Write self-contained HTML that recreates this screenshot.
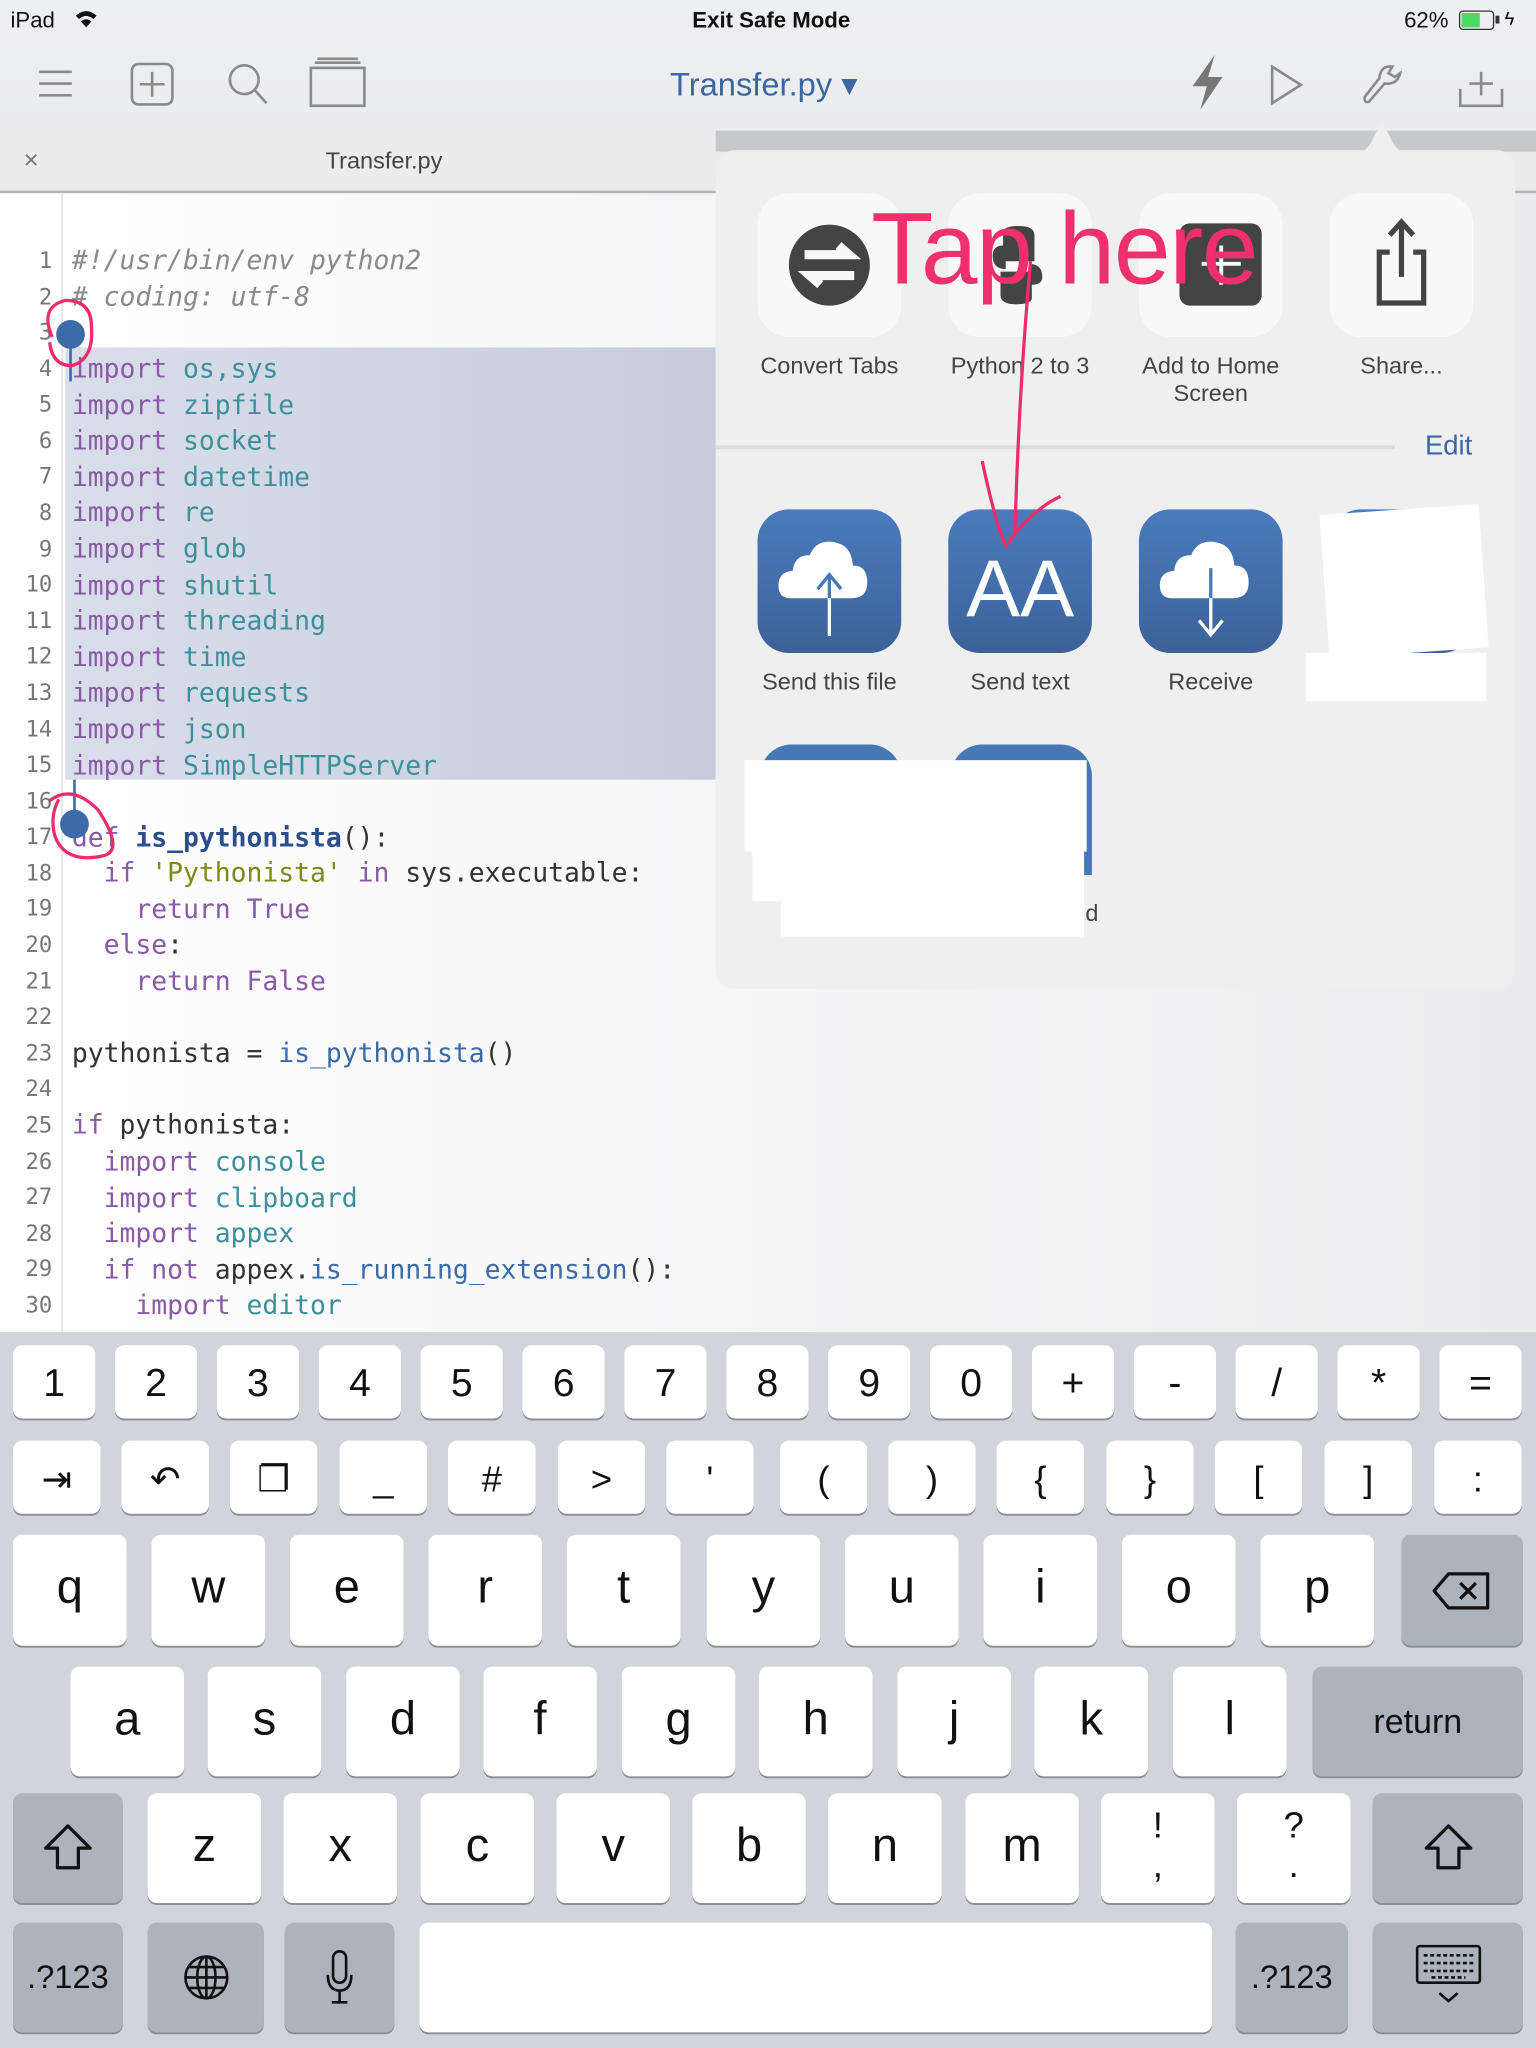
<!DOCTYPE html>
<html><head><meta charset="utf-8">
<style>
*{margin:0;padding:0;box-sizing:border-box}
html,body{width:1536px;height:2048px;overflow:hidden;background:#d1d4da}
#w{position:absolute;left:0;top:0;width:1176px;height:1568px;transform:scale(1.3061224);transform-origin:0 0;font-family:"Liberation Sans",sans-serif;overflow:hidden}
.a{position:absolute}
#top{left:0;top:0;width:1176px;height:148px;background:linear-gradient(#eeeff1,#ebebec)}
#ed{left:0;top:148px;width:1176px;height:872px;background:linear-gradient(90deg,#ffffff 0%,#f7f7f8 40%,#ececee 100%)}
.ln{position:absolute;left:0;width:40px;text-align:right;font-family:"DejaVu Sans Mono",monospace;font-size:17px;color:#777}
.cl{position:absolute;left:55px;font-family:"DejaVu Sans Mono",monospace;font-size:20.2px;white-space:pre;color:#333}
.k{color:#8a5aa6}.m{color:#3d8f9c}.c{color:#8a8a8a;font-style:italic}.f{color:#2b4f8a;font-weight:bold}.s{color:#7b8a1a}.b{color:#3a6aa8}
#kb{left:0;top:1020px;width:1176px;height:548px;background:#d1d4da}
.key{position:absolute;background:#fff;border-radius:7px;box-shadow:0 1.5px 0 #8b8e94;text-align:center;color:#111;font-family:"Liberation Sans",sans-serif}
.g{background:#adb3bd}
.r1{top:1030px;height:56px;width:63px;font-size:30px;line-height:60px}
.r2{top:1103px;height:56px;width:67px;font-size:28px;line-height:60px}
.r3{top:1175px;height:85px;width:87px;font-size:36px;line-height:80px}
.r4{top:1276px;height:84px;width:87px;font-size:36px;line-height:80px}
.r5{top:1373px;height:84px;width:87px;font-size:36px;line-height:80px}
.r6{top:1472px;height:84px;font-size:25px;line-height:84px}
.ic{position:absolute;width:110px;height:110px;border-radius:24px}
.wi{background:#f8f8f8}
.bl{background:linear-gradient(#4a7bbd,#3c6298)}
.lb{position:absolute;width:146px;text-align:center;font-size:18px;color:#444;line-height:21px}
</style></head><body><div id="w">
<div id="top" class="a"></div>
<div class="a" style="left:8px;top:6px;font-size:17px;color:#111">iPad</div>
<svg class="a" style="left:56px;top:6px" width="20" height="16" viewBox="0 0 20 16"><path d="M2 6 Q10 -1 18 6 L15.5 8.5 Q10 4 4.5 8.5Z M6 10.5 Q10 7 14 10.5 L10 15Z" fill="#111"/></svg>
<div class="a" style="left:0;width:1181px;top:6px;text-align:center;font-size:17px;font-weight:bold;color:#111">Exit Safe Mode</div>
<div class="a" style="left:1075px;top:6px;font-size:17px;color:#111">62%</div>
<div class="a" style="left:1117px;top:8px;width:27px;height:15px;border:1.5px solid #333;border-radius:3px;padding:1px"><div style="width:62%;height:100%;background:#4cd964"></div></div>
<div class="a" style="left:1145px;top:12px;width:3px;height:6px;background:#333"></div>
<div class="a" style="left:1152px;top:6px;font-size:14px">ϟ</div>
<svg class="a" style="left:0;top:40px" width="300" height="50"><g stroke="#8a8a8a" stroke-width="2" fill="none"><path d="M30 15H55M30 24H55M30 33H55"/><rect x="101" y="9" width="31" height="31" rx="5"/><path d="M116.5 15V34M107 24.5H126"/><circle cx="187" cy="21" r="11"/><path d="M195 29L204 39"/><rect x="238" y="12" width="41" height="29"/><path d="M241 8H276M243 5H274"/></g></svg>
<div class="a" style="left:513px;top:50px;font-size:25px;color:#3c66a3">Transfer.py ▾</div>
<svg class="a" style="left:900px;top:38px" width="260" height="52"><g fill="#777"><path d="M30 4L13 28H24L19 46L36 21H25Z"/></g><g stroke="#8a8a8a" stroke-width="2" fill="none"><path d="M74 13L96 27L74 41Z"/><path d="M148 40L160 26Q170 27 172 18L168 21L163 18L166 13Q157 12 156 22L145 36Q144 41 148 40Z"/><path d="M218 30V43H250V30M234 17V35M225 26H243"/></g></svg>
<div class="a" style="left:18px;top:112px;font-size:20px;color:#777">×</div>
<div class="a" style="left:0;width:588px;top:113px;text-align:center;font-size:18px;color:#444">Transfer.py</div>
<div class="a" style="left:548px;top:100px;width:628px;height:16px;background:#c7c8cb"></div>
<div class="a" style="left:0;top:146px;width:1176px;height:2px;background:#b5b5b5"></div>
<div id="ed" class="a"></div>
<div class="a" style="left:47px;top:148px;width:1px;height:872px;background:#ddd"></div>
<div class="a" style="left:50px;top:266px;width:498px;height:331px;background:linear-gradient(90deg,#d8deea,#c5ccdb)"></div>
<div class="ln" style="top:190px">1</div><div class="ln" style="top:218px">2</div><div class="ln" style="top:245px">3</div><div class="ln" style="top:273px">4</div><div class="ln" style="top:300px">5</div><div class="ln" style="top:328px">6</div><div class="ln" style="top:355px">7</div><div class="ln" style="top:383px">8</div><div class="ln" style="top:411px">9</div><div class="ln" style="top:438px">10</div><div class="ln" style="top:466px">11</div><div class="ln" style="top:493px">12</div><div class="ln" style="top:521px">13</div><div class="ln" style="top:549px">14</div><div class="ln" style="top:576px">15</div><div class="ln" style="top:604px">16</div><div class="ln" style="top:631px">17</div><div class="ln" style="top:659px">18</div><div class="ln" style="top:686px">19</div><div class="ln" style="top:714px">20</div><div class="ln" style="top:742px">21</div><div class="ln" style="top:769px">22</div><div class="ln" style="top:797px">23</div><div class="ln" style="top:824px">24</div><div class="ln" style="top:852px">25</div><div class="ln" style="top:880px">26</div><div class="ln" style="top:907px">27</div><div class="ln" style="top:935px">28</div><div class="ln" style="top:962px">29</div><div class="ln" style="top:990px">30</div>
<div class="cl c" style="top:187px">#!/usr/bin/env python2</div>
<div class="cl c" style="top:215px"># coding: utf-8</div>
<div class="cl" style="top:270px"><span class="k">import</span> <span class="m">os,sys</span></div>
<div class="cl" style="top:298px"><span class="k">import</span> <span class="m">zipfile</span></div>
<div class="cl" style="top:325px"><span class="k">import</span> <span class="m">socket</span></div>
<div class="cl" style="top:353px"><span class="k">import</span> <span class="m">datetime</span></div>
<div class="cl" style="top:380px"><span class="k">import</span> <span class="m">re</span></div>
<div class="cl" style="top:408px"><span class="k">import</span> <span class="m">glob</span></div>
<div class="cl" style="top:436px"><span class="k">import</span> <span class="m">shutil</span></div>
<div class="cl" style="top:463px"><span class="k">import</span> <span class="m">threading</span></div>
<div class="cl" style="top:491px"><span class="k">import</span> <span class="m">time</span></div>
<div class="cl" style="top:518px"><span class="k">import</span> <span class="m">requests</span></div>
<div class="cl" style="top:546px"><span class="k">import</span> <span class="m">json</span></div>
<div class="cl" style="top:574px"><span class="k">import</span> <span class="m">SimpleHTTPServer</span></div>
<div class="cl" style="top:629px"><span class="k">def</span> <span class="f">is_pythonista</span>():</div>
<div class="cl" style="top:656px">  <span class="k">if</span> <span class="s">'Pythonista'</span> <span class="k">in</span> sys.executable:</div>
<div class="cl" style="top:684px">    <span class="k">return</span> <span class="k">True</span></div>
<div class="cl" style="top:711px">  <span class="k">else</span>:</div>
<div class="cl" style="top:739px">    <span class="k">return</span> <span class="k">False</span></div>
<div class="cl" style="top:794px">pythonista = <span class="b">is_pythonista</span>()</div>
<div class="cl" style="top:849px"><span class="k">if</span> pythonista:</div>
<div class="cl" style="top:877px">  <span class="k">import</span> <span class="m">console</span></div>
<div class="cl" style="top:905px">  <span class="k">import</span> <span class="m">clipboard</span></div>
<div class="cl" style="top:932px">  <span class="k">import</span> <span class="m">appex</span></div>
<div class="cl" style="top:960px">  <span class="k">if</span> <span class="k">not</span> appex.<span class="b">is_running_extension</span>():</div>
<div class="cl" style="top:987px">    <span class="k">import</span> <span class="m">editor</span></div>
<div class="a" style="left:43px;top:245px;width:22px;height:22px;border-radius:50%;background:#3d6aa8"></div>
<div class="a" style="left:53px;top:262px;width:2px;height:30px;background:#3d6aa8"></div>
<div class="a" style="left:46px;top:620px;width:22px;height:22px;border-radius:50%;background:#3d6aa8"></div>
<div class="a" style="left:56px;top:597px;width:2px;height:28px;background:#3d6aa8"></div>
<div class="a" style="left:548px;top:115px;width:612px;height:642px;background:#efefef;border-radius:14px"></div>
<svg class="a" style="left:1035px;top:92px" width="46" height="26"><path d="M0 26Q12 26 17 12L23 2L29 12Q34 26 46 26Z" fill="#efefef"/></svg>
<div class="ic wi" style="left:580px;top:148px"></div><div class="ic wi" style="left:726px;top:148px"></div><div class="ic wi" style="left:872px;top:148px"></div><div class="ic wi" style="left:1018px;top:148px"></div>
<svg class="a" style="left:580px;top:148px" width="550" height="110">
<circle cx="55" cy="55" r="31" fill="#444"/><path d="M36 47H70L62 40M74 63H40L48 70" stroke="#f8f8f8" stroke-width="7" fill="none"/>
<path d="M188 30Q188 25 200 25Q212 25 212 32V52H190V58Q180 58 180 48Q180 40 188 40Z M210 80Q210 85 198 85Q186 85 186 78V60H208V54Q218 54 218 64Q218 70 210 70Z" fill="#444"/>
<rect x="323" y="23" width="63" height="63" rx="8" fill="#444"/><path d="M340 54H370M355 40V70" stroke="#f8f8f8" stroke-width="3"/>
<path d="M484 45H476V84H510V45H502M493 64V24M484 32L493 22L502 32" stroke="#444" stroke-width="4" fill="none"/>
</svg>
<div class="lb" style="left:562px;top:270px">Convert Tabs</div>
<div class="lb" style="left:708px;top:270px">Python 2 to 3</div>
<div class="lb" style="left:854px;top:270px">Add to Home Screen</div>
<div class="lb" style="left:1000px;top:270px">Share...</div>
<div class="a" style="left:548px;top:341px;width:520px;height:3px;background:#dcdcdc"></div>
<div class="a" style="left:1091px;top:330px;font-size:21px;color:#3c66a3">Edit</div>
<div class="ic bl" style="left:580px;top:390px"></div><div class="ic bl" style="left:726px;top:390px"></div><div class="ic bl" style="left:872px;top:390px"></div><div class="ic bl" style="left:1018px;top:390px"></div>
<svg class="a" style="left:580px;top:390px" width="400" height="110">
<path d="M25 68Q16 68 16 58Q16 48 27 47Q28 35 40 35Q45 23 58 25Q72 27 73 43Q84 43 84 56Q84 68 72 68Z" fill="#fff"/><path d="M55 97V50M46 61L55 50L64 61" stroke="#4678b5" stroke-width="2.5" fill="none"/><path d="M55 97V68" stroke="#fff" stroke-width="2.5"/>
<text x="201" y="82" text-anchor="middle" font-family="Liberation Sans,sans-serif" font-size="62" fill="#fff">AA</text>
<path d="M317 68Q308 68 308 58Q308 48 319 47Q320 35 332 35Q337 23 350 25Q364 27 365 43Q376 43 376 56Q376 68 364 68Z" fill="#fff"/><path d="M347 45V96M338 85L347 96L356 85" stroke="#4678b5" stroke-width="2.5" fill="none"/><path d="M347 68V96M338 85L347 96L356 85" stroke="#fff" stroke-width="2.5" fill="none"/>
</svg>
<div class="lb" style="left:562px;top:512px">Send this file</div>
<div class="lb" style="left:708px;top:512px">Send text</div>
<div class="lb" style="left:854px;top:512px">Receive</div>
<div class="a" style="left:1014px;top:390px;width:122px;height:110px;background:#fff;transform:rotate(-4deg)"></div>
<div class="a" style="left:1000px;top:500px;width:138px;height:37px;background:#fff"></div>
<div class="a" style="left:582px;top:570px;width:108px;height:40px;background:#4678b5;border-radius:24px 24px 0 0"></div>
<div class="a" style="left:728px;top:570px;width:108px;height:100px;background:#4678b5;border-radius:24px 24px 0 0"></div>
<div class="a" style="left:570px;top:582px;width:262px;height:70px;background:#fff"></div>
<div class="a" style="left:576px;top:610px;width:245px;height:80px;background:#fff"></div>
<div class="a" style="left:598px;top:650px;width:232px;height:67px;background:#fff"></div>
<div class="a" style="left:831px;top:689px;font-size:18px;color:#444">d</div>
<div class="a" style="left:667px;top:145px;font-size:78px;color:#f0306d;letter-spacing:-1px;line-height:90px">Tap here</div>
<svg class="a" style="left:0;top:0" width="1176" height="700"><g stroke="#ec2d6a" stroke-width="2.5" fill="none">
<path d="M789 200Q780 300 777 410M752 353Q762 400 770 418Q790 390 812 380"/>
<path d="M40 258Q30 235 50 230Q70 230 70 250Q72 275 55 280Q40 280 38 262"/>
<path d="M38 613Q55 600 75 620Q95 650 80 655Q50 662 42 640Q38 625 45 612"/>
</g></svg>
<div id="kb" class="a"></div>
<div class="key r1" style="left:10px">1</div><div class="key r1" style="left:88px">2</div><div class="key r1" style="left:166px">3</div><div class="key r1" style="left:244px">4</div><div class="key r1" style="left:322px">5</div><div class="key r1" style="left:400px">6</div><div class="key r1" style="left:478px">7</div><div class="key r1" style="left:556px">8</div><div class="key r1" style="left:634px">9</div><div class="key r1" style="left:712px">0</div><div class="key r1" style="left:790px">+</div><div class="key r1" style="left:868px">-</div><div class="key r1" style="left:946px">/</div><div class="key r1" style="left:1024px">*</div><div class="key r1" style="left:1102px">=</div>
<div class="key r2" style="left:10px">⇥</div><div class="key r2" style="left:93px">↶</div><div class="key r2" style="left:176px">❐</div><div class="key r2" style="left:260px">_</div><div class="key r2" style="left:343px">#</div><div class="key r2" style="left:427px">&gt;</div><div class="key r2" style="left:510px">'</div><div class="key r2" style="left:597px">(</div><div class="key r2" style="left:680px">)</div><div class="key r2" style="left:763px">{</div><div class="key r2" style="left:847px">}</div><div class="key r2" style="left:930px">[</div><div class="key r2" style="left:1014px">]</div><div class="key r2" style="left:1098px">:</div>
<div class="key r3" style="left:10px">q</div><div class="key r3" style="left:116px">w</div><div class="key r3" style="left:222px">e</div><div class="key r3" style="left:328px">r</div><div class="key r3" style="left:434px">t</div><div class="key r3" style="left:541px">y</div><div class="key r3" style="left:647px">u</div><div class="key r3" style="left:753px">i</div><div class="key r3" style="left:859px">o</div><div class="key r3" style="left:965px">p</div>
<div class="key r3 g" style="left:1073px;width:93px"><svg width="50" height="34" style="margin-top:26px"><path d="M14 4H44V30H14L3 17Z" stroke="#111" stroke-width="2.5" fill="none" stroke-linejoin="round"/><path d="M23 11L35 23M35 11L23 23" stroke="#111" stroke-width="2.5"/></svg></div>
<div class="key r4" style="left:54px">a</div><div class="key r4" style="left:159px">s</div><div class="key r4" style="left:265px">d</div><div class="key r4" style="left:370px">f</div><div class="key r4" style="left:476px">g</div><div class="key r4" style="left:581px">h</div><div class="key r4" style="left:687px">j</div><div class="key r4" style="left:792px">k</div><div class="key r4" style="left:898px">l</div>
<div class="key r4 g" style="left:1005px;width:161px;font-size:26px;line-height:84px">return</div>
<div class="key r5 g" style="left:10px;width:84px"><svg width="40" height="40" style="margin-top:22px"><path d="M20 3L37 20H28V35H12V20H3Z" stroke="#111" stroke-width="2.5" fill="none" stroke-linejoin="round"/></svg></div>
<div class="key r5" style="left:113px">z</div><div class="key r5" style="left:217px">x</div><div class="key r5" style="left:322px">c</div><div class="key r5" style="left:426px">v</div><div class="key r5" style="left:530px">b</div><div class="key r5" style="left:634px">n</div><div class="key r5" style="left:739px">m</div>
<div class="key r5" style="left:843px;font-size:28px;line-height:30px;padding-top:10px">!<br>,</div><div class="key r5" style="left:947px;font-size:28px;line-height:30px;padding-top:10px">?<br>.</div>
<div class="key r5 g" style="left:1051px;width:115px"><svg width="40" height="40" style="margin-top:22px"><path d="M20 3L37 20H28V35H12V20H3Z" stroke="#111" stroke-width="2.5" fill="none" stroke-linejoin="round"/></svg></div>
<div class="key r6 g" style="left:10px;width:84px">.?123</div>
<div class="key r6 g" style="left:113px;width:89px"><svg width="36" height="36" style="margin-top:24px"><g stroke="#111" stroke-width="2" fill="none"><circle cx="18" cy="18" r="16"/><ellipse cx="18" cy="18" rx="7" ry="16"/><path d="M2 18H34M5 10H31M5 26H31M18 2V34"/></g></svg></div>
<div class="key r6 g" style="left:218px;width:84px"><svg width="24" height="44" style="margin-top:20px"><g stroke="#111" stroke-width="2" fill="none"><rect x="7" y="2" width="10" height="24" rx="5"/><path d="M3 20Q3 32 12 32Q21 32 21 20M12 32V41M6 41H18"/></g></svg></div>
<div class="key r6" style="left:321px;width:607px"></div>
<div class="key r6 g" style="left:946px;width:86px">.?123</div>
<div class="key r6 g" style="left:1051px;width:115px"><svg width="52" height="50" style="margin-top:16px"><g stroke="#111" stroke-width="2" fill="none"><rect x="2" y="2" width="48" height="28" rx="2"/><path d="M7 9H45M7 15H45M7 21H45M13 26H39" stroke-dasharray="3 2"/><path d="M19 38L26 44L33 38"/></g></svg></div>
</div></body></html>
